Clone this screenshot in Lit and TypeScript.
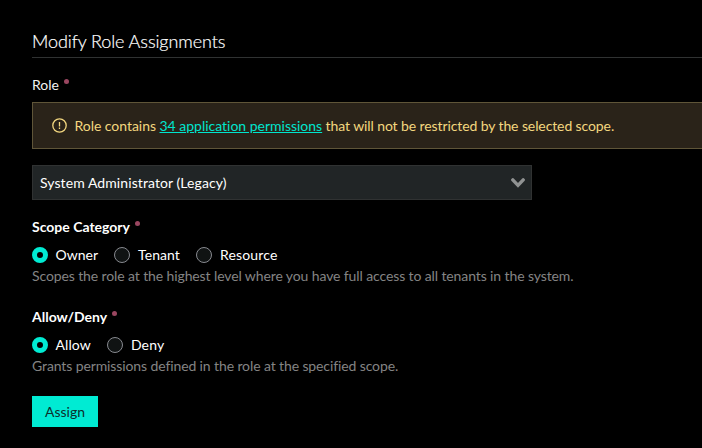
import { LitElement, html, css } from "lit";
import { customElement, property, state } from "lit/decorators.js";
import { classMap } from "lit/directives/class-map.js";

@customElement("field-label")
class FieldLabel extends LitElement {
  static styles = css`
    :host { display: flex; height: 20px; align-items: flex-start; }
    .text { line-height: 20px; white-space: nowrap; }
    .dot { width: 5px; height: 5px; border-radius: 50%; background: #9a4660; margin: 4px 0 0 5px; }
  `;
  render() {
    return html`<span class="text"><slot></slot></span><span class="dot"></span>`;
  }
}

@customElement("radio-group")
class RadioGroup extends LitElement {
  static styles = css`
    :host { display: flex; gap: 16px; height: 20px; }
    .option { display: flex; align-items: center; gap: 8px; line-height: 20px; color: #fff; white-space: nowrap; }
    .option:first-child { gap: 7.5px; }
    .option:nth-child(2) { letter-spacing: 0.08px; }
    .option:last-child { letter-spacing: 0.15px; }
    .ring { box-sizing: border-box; width: 16px; height: 16px; border-radius: 50%; border: 1px solid #87898f; background: #101313; }
    .ring.on { border: 5px solid #00ebd3; background: #000; }
    :host(.compact) .option:first-child { letter-spacing: 0.1px; }
  `;
  @property({ attribute: false }) options: string[] = [];
  @state() private selected = 0;
  render() {
    return this.options.map(
      (o, i) => html`<label class="option" @click=${() => (this.selected = i)}>
        <span class=${classMap({ ring: true, on: i === this.selected })}></span><span>${o}</span>
      </label>`
    );
  }
}

@customElement("app-root")
class AppRoot extends LitElement {
  static styles = css`
    :host {
      display: flex; flex-direction: column; box-sizing: border-box; height: 448px; overflow: hidden;
      padding: 28px 0 0 32px; background: #000; color: #f2f2f2;
      font: 14px/20px Lato, "Liberation Sans", sans-serif;
    }
    .title {
      margin: 0; height: 29px; line-height: 27px; font-size: 18px; font-weight: 300; letter-spacing: -0.09px;
      color: #fff; -webkit-text-stroke: 0.2px #fff; border-bottom: 1px solid #303232;
    }
    .role { margin-top: 17px; }
    .alert {
      box-sizing: border-box; height: 47px; margin-top: 7px; padding-left: 19px; display: flex; align-items: center;
      border: 1px solid #5f5538; border-right: 0; background: #2a2319; color: #f3d77f; white-space: nowrap;
    }
    .alert svg { margin-right: 6.5px; flex: none; }
    .lead { letter-spacing: -0.04px; }
    .link { color: #00e5ce; text-decoration: underline; letter-spacing: -0.01px; }
    .tail { letter-spacing: -0.1px; }
    .select {
      box-sizing: border-box; width: 500px; height: 35px; margin-top: 16px; padding: 0 6px 0 7px;
      display: flex; align-items: center; justify-content: space-between; letter-spacing: 0.08px;
      border: 1px solid #303232; background: #212526; color: #fff;
    }
    .bold { font-weight: 700; color: #fff; }
    .scope { margin-top: 17px; }
    .effect { margin-top: 21px; }
    .radios { margin-top: 8px; }
    .hint { height: 20px; margin-top: 1px; color: #848484; white-space: nowrap; letter-spacing: -0.11px; }
    .assign {
      width: 66px; height: 31px; margin-top: 20px; padding: 0; border: 0; border-radius: 0;
      background: #00ebd3; color: #0d2e2c; font: inherit;
    }
  `;
  render() {
    return html`
      <h1 class="title">Modify Role Assignments</h1>
      <field-label class="role">Role</field-label>
      <div class="alert">
        <svg width="16" height="16" viewBox="0 0 16 16" fill="none" stroke="#f3d77f">
          <circle cx="7.5" cy="7.5" r="6.7" stroke-width="1.3" />
          <path d="M7.5 4v4.6M7.5 9.6v1.5" stroke-width="1.3" />
        </svg>
        <span><span class="lead">Role contains </span><a class="link">34 application permissions</a><span class="tail"> that will not be restricted by the selected scope.</span></span>
      </div>
      <div class="select">
        <span>System Administrator (Legacy)</span>
        <svg width="14" height="10" viewBox="0 0 14 10" fill="none" stroke="#909292" stroke-width="3.4" stroke-linecap="round">
          <path d="M1.8 1.9 7 7.4 12.2 1.9" />
        </svg>
      </div>
      <field-label class="scope bold">Scope Category</field-label>
      <radio-group class="radios" .options=${["Owner", "Tenant", "Resource"]}></radio-group>
      <div class="hint">Scopes the role at the highest level where you have full access to all tenants in the system.</div>
      <field-label class="effect bold">Allow/Deny</field-label>
      <radio-group class="radios compact" .options=${["Allow", "Deny"]}></radio-group>
      <div class="hint">Grants permissions defined in the role at the specified scope.</div>
      <button class="assign">Assign</button>
    `;
  }
}
